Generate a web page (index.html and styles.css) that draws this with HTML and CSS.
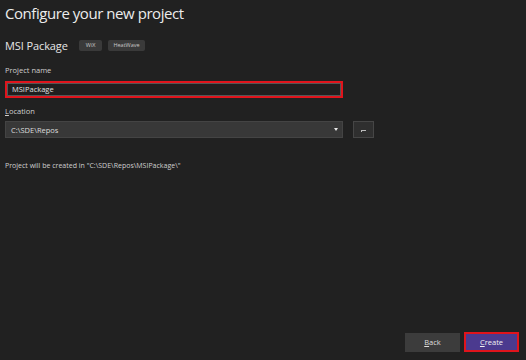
FILE: index.html
```html
<!DOCTYPE html>
<html lang="en">
<head>
    <meta charset="UTF-8">
    <title>Configure your new project</title>
    <link rel="stylesheet" href="styles.css">
</head>
<body>
    <div class="dialog">
        <h1 class="title">Configure your new project</h1>
        <div class="template">
            <span class="template-name">MSI Package</span>
            <span class="tag tag-wide">WiX</span>
            <span class="tag">HeatWave</span>
        </div>

        <label class="field-label">Project name</label>
        <div class="text-input">MSIPackage</div>

        <label class="field-label"><u>L</u>ocation</label>
        <div class="location-row">
            <div class="combo">
                <span>C:\SDE\Repos</span>
                <span class="combo-arrow"></span>
            </div>
            <button class="browse"><span class="browse-dots"></span></button>
        </div>

        <p class="info">Project will be created in "C:\SDE\Repos\MSIPackage\"</p>

        <div class="footer">
            <button class="btn"><u>B</u>ack</button>
            <button class="btn btn-primary"><u>C</u>reate</button>
        </div>
    </div>
</body>
</html>
```

FILE: styles.css
```css
* {
    margin: 0;
    padding: 0;
    box-sizing: border-box;
}

body {
    background: #212121;
    color: #d6d6d6;
    font-family: "Open Sans", "Noto Sans", sans-serif;
    height: 100vh;
    overflow: hidden;
}

.dialog {
    height: 100%;
    display: flex;
    flex-direction: column;
    padding: 2px 7px 8px 5px;
}

.title {
    font-size: 15px;
    font-weight: 400;
    letter-spacing: -0.45px;
    line-height: 22px;
    color: #ececec;
}

.template {
    display: flex;
    align-items: center;
    margin-top: 15px;
    height: 12px;
}

.template-name {
    font-size: 11px;
    letter-spacing: -0.1px;
    color: #e6e6e6;
    margin-right: 11px;
}

.tag {
    font-size: 5.5px;
    background: #3a3a3a;
    color: #c8c8c8;
    height: 11px;
    line-height: 11px;
    padding: 0 5px;
    border-radius: 2px;
    margin-right: 6px;
}

.tag-wide {
    padding: 0 7px;
}

.field-label {
    display: block;
    font-size: 7.5px;
    color: #cfcfcf;
    line-height: 10px;
}

.template + .field-label {
    margin-top: 14px;
}

.text-input {
    margin-top: 6px;
    width: 338px;
    height: 17px;
    border: 2px solid #e0141c;
    background: #1f1f1f;
    box-shadow: inset 0 0 0 1px #555;
    font-size: 7.5px;
    line-height: 13px;
    padding-left: 5px;
    color: #e0e0e0;
}

.text-input + .field-label {
    margin-top: 8px;
}

.location-row {
    display: flex;
    margin-top: 5px;
    gap: 10px;
}

.combo {
    width: 338px;
    height: 17px;
    background: #383838;
    border: 1px solid #444;
    display: flex;
    align-items: center;
    justify-content: space-between;
    padding: 0 4px 0 5px;
    font-size: 7.5px;
    color: #dcdcdc;
}

.combo-arrow {
    width: 0;
    height: 0;
    border-left: 2px solid transparent;
    border-right: 2px solid transparent;
    border-top: 3px solid #e6e6e6;
}

.browse {
    width: 21px;
    height: 17px;
    background: #2f2f2f;
    border: 1px solid #464646;
    display: flex;
    align-items: flex-end;
    justify-content: center;
    padding-bottom: 5px;
}

.browse-dots {
    width: 5px;
    height: 2px;
    border-top: 1px solid #bbb;
    border-left: 1px solid #bbb;
}

.info {
    margin-top: 23px;
    font-size: 7px;
    color: #cfcfcf;
}

.footer {
    margin-top: auto;
    display: flex;
    justify-content: flex-end;
    align-items: center;
    gap: 4px;
}

.btn {
    width: 55px;
    height: 19px;
    background: #3c3c3c;
    border: 1px solid #3c3c3c;
    color: #dedede;
    font-family: "Open Sans", "Noto Sans", sans-serif;
    font-size: 7.5px;
}

.btn-primary {
    height: 20px;
    background: #4b3a8f;
    border: 2px solid #e0141c;
    color: #f0f0f0;
}
```
